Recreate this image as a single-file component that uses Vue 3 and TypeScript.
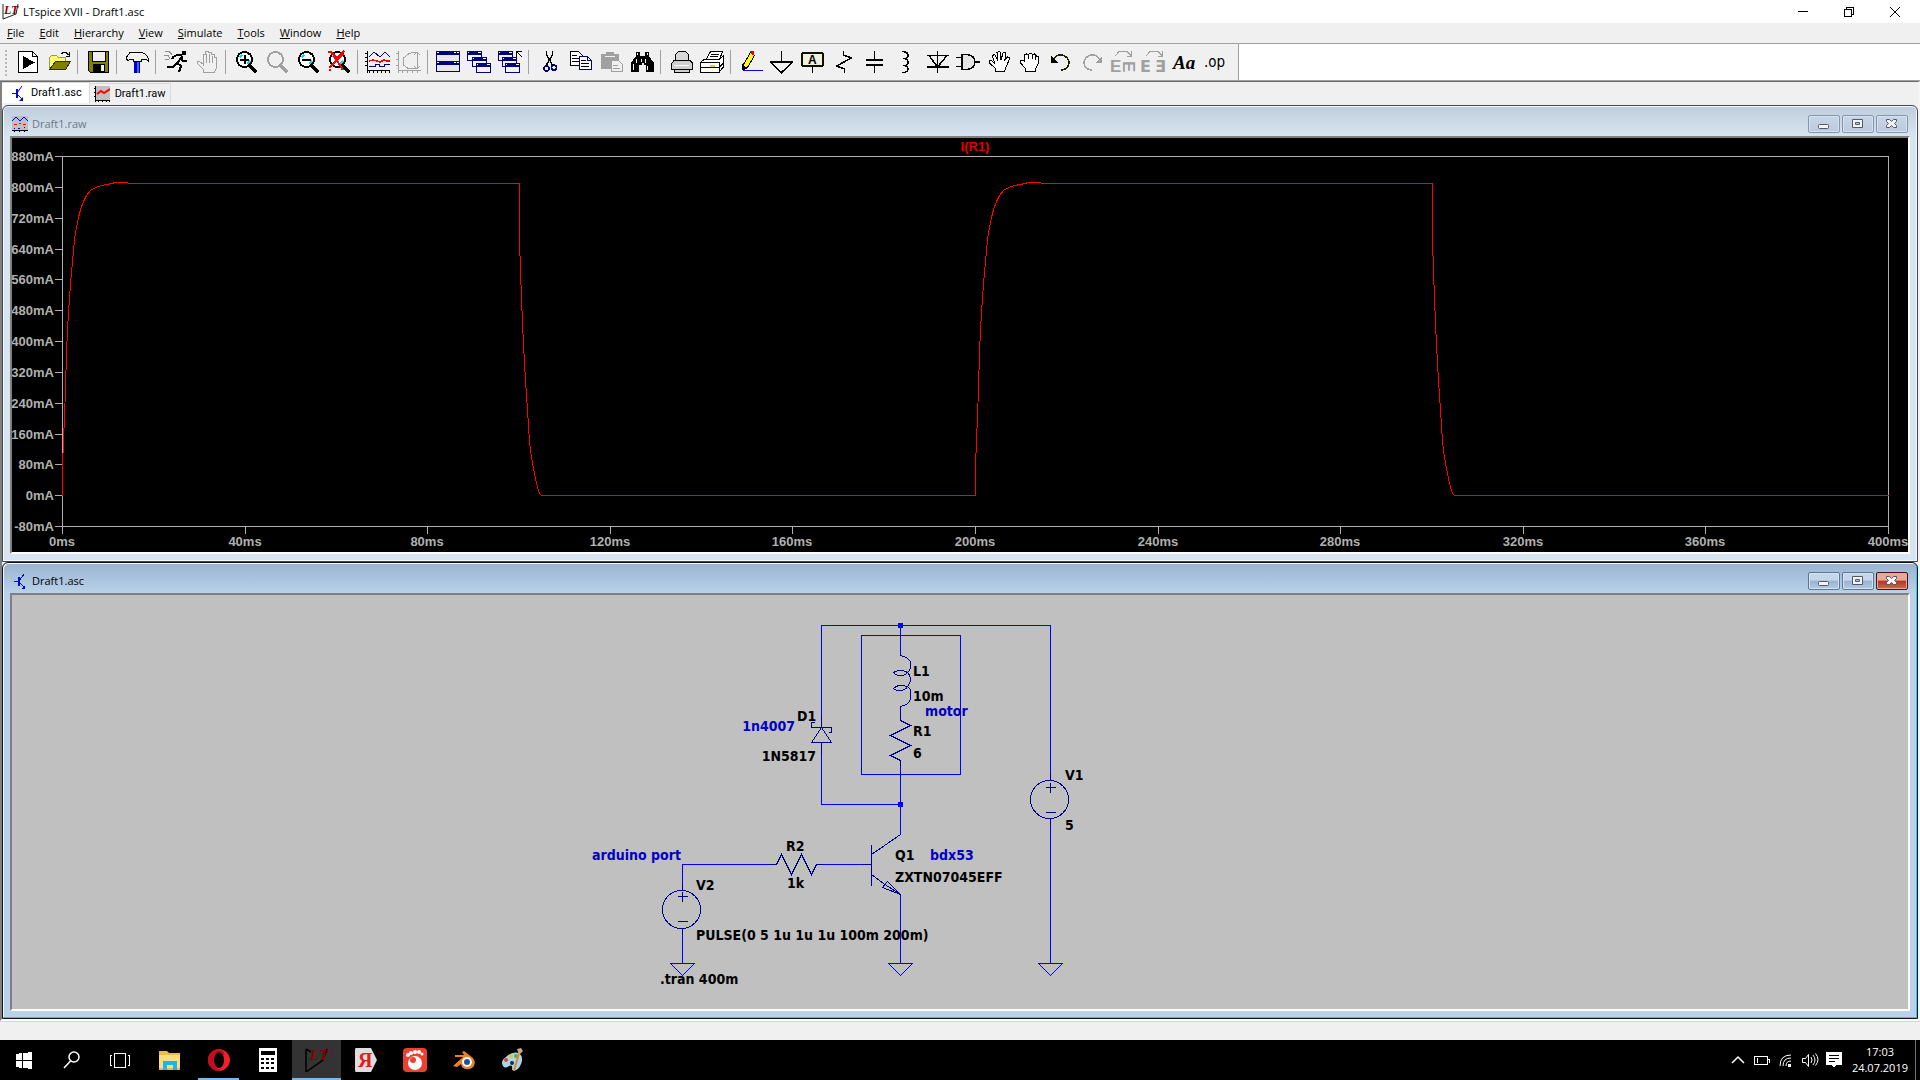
<script setup lang="ts">
interface Tool {
  label: string
  art: string
  off?: boolean
}
type ToolGroup = Tool[]

interface Label {
  x: number
  y: number
  text: string
  note?: boolean
  end?: boolean
}

const menus: string[] = ['File', 'Edit', 'Hierarchy', 'View', 'Simulate', 'Tools', 'Window', 'Help']

const lens = (ink: string, glass: string, inner: string): string =>
  `<circle cx="10.500" cy="9.500" r="7.500" fill="${glass}" stroke="${ink}" stroke-width="2"/>${inner}<path d="M15.500 15.500l7 6.500" stroke="${ink}" stroke-width="3.500" fill="none"/>`

const shine = '<path d="M6 7.500l2-3M13 14l3-3" stroke="#00e0e8" stroke-width="2" fill="none"/>'

const smallWindow = (x: number, y: number): string =>
  `<rect x="${x + 0.5}" y="${y + 0.5}" width="14" height="9" fill="#f4f4f4" stroke="#000080"/><rect x="${x}" y="${y}" width="15" height="4" fill="#000080"/><path d="M${x + 1} ${y + 1.5}h1M${x + 11} ${y + 1.5}h3" stroke="#fff"/>`

const palm =
  'M8.500 21.500v-3l-6-5.500v-2l2-.5 3 2.500-2-7 1.500-1.500 1.500 1 2 5-.5-8 2-1 1.500 1 .5 7.500 2-7 2-.5 1 1.500-1.500 7 3-4 2 .5v1.500l-3 7-2 5.500z'

const groups: ToolGroup[] = [
  [
    {
      label: 'New schematic',
      art: '<path d="M2.500 1.500h14l5 5v16h-19z" fill="#fff" stroke="#000"/><path d="M16.500 1.500v5h5" fill="none" stroke="#000"/><path d="M7 6l12 6.500L7 19z"/>',
    },
    {
      label: 'Open',
      art: '<path d="M2.500 19V7.500l2-2h5l2 2h7V12" fill="#ffff70" stroke="#9a9a50"/><path d="M2.500 19.500l6-8h15l-5 8z" fill="#808000" stroke="#303000"/><path d="M14.500 4q3-4 7 1M22.500 1.500V6h-4" fill="none" stroke="#000"/>',
    },
  ],
  [
    {
      label: 'Save',
      art: '<path d="M2.500 1.500h20v21h-18l-2-2z" fill="#808000" stroke="#000" stroke-width="1"/><rect x="6.500" y="1.500" width="13" height="10" fill="#f0f0f0" stroke="#000"/><rect x="7" y="14" width="12" height="8.500"/><rect x="15" y="15" width="3" height="6" fill="#f0f0f0"/>',
    },
  ],
  [
    {
      label: 'Control panel',
      art: '<path d="M1 8l4-5.500h10q6 0 8.500 6v3l-3-2.500h-4v2.500h-8V9H5.500L3 11z" fill="#f0f0f0" stroke="#000"/><path d="M6 4.500h9" stroke="#fff"/><path d="M9 12h6v11H9z" fill="#0000c0"/><path d="M12 12h2v11h-2z" fill="#4060ff"/>',
    },
  ],
  [
    {
      label: 'Run',
      art: '<path d="M18 1h4v4h-4z"/><path d="M9 7l4-2h4l1 2-5 6 4 3-2 6M13 13l-4 4H3M17 8l2 3h4M10 6L8 9" stroke="#000" stroke-width="2" fill="none"/><path d="M1 1.500h4l3 3M0 5.500h4l2 3M1 9.500h4" stroke="#909090" fill="none"/>',
    },
    {
      label: 'Halt',
      off: true,
      art: '<path d="M8.500 22.500v-3l-6-6v-2h2l4 3v-10h2v-3h3v1h3v2h3v3h2v10l-2 5z" fill="#f0f0f0" stroke="#a0a0a0"/><path d="M11.500 4v9M14.500 4v9M17.500 6v7M8.500 6v10" stroke="#a0a0a0"/>',
    },
  ],
  [
    { label: 'Zoom area', art: lens('#000', '#fff', shine + '<path d="M6 9.500h9M10.500 5v9" stroke="#000" stroke-width="2"/>') },
    { label: 'Pan', off: true, art: lens('#a0a0a0', '#f0f0f0', '') },
    { label: 'Zoom back', art: lens('#000', '#fff', shine + '<path d="M6 9.500h9" stroke="#000" stroke-width="2"/>') },
    {
      label: 'Zoom full extents',
      art: lens('#000', '#fff', shine) + '<path d="M1 2h3l6 6 7-7M2 18l14-14M2 20h2M7 6l9 14" stroke="#f00" stroke-width="2" fill="none"/>',
    },
  ],
  [
    {
      label: 'Autorange',
      art: '<path d="M1.500 1v21.500M-1 3.500h2M-1 7.500h2M-1 11.500h2M-1 15.500h2M1 20.500h23M3.500 21v2M7.500 21v2M11.500 21v2M15.500 21v2M19.500 21v2M23.500 21v2" stroke="#000"/><path d="M3 7l5-5 6 5 5-5 5 5M3 16.500h6v-2h4v2h5v-2h6" stroke="#000090" fill="none"/><path d="M3 11l4-1 4 1 3 1 4-2 3 1h3" stroke="#f00" stroke-width="1.500" fill="none"/>',
    },
    {
      label: 'Bode plot',
      off: true,
      art: '<path d="M1.500 1v21.500M-1 3.500h2M-1 9.500h2M-1 15.500h2M1 20.500h23M5.500 21v2M10.500 21v2M15.500 21v2M20.500 21v2M12 3.500L6.500 8v7l5.500 4M11 3.500l8-1.500M12 18.500h8M20.500 2v17M17 5l3-3 3 3M17 16l3 3 3-3" stroke="#a0a0a0" fill="none"/>',
    },
  ],
  [
    {
      label: 'Tile windows',
      art: '<rect x=".5" y="1.500" width="23" height="20" fill="#e8e8e8" stroke="#000080"/><path d="M0 1h24v4H0zM0 11h24v4H0z" fill="#000080"/><path d="M1 2.500h2M18 2.500h2M21 2.500h2M1 12.500h2M18 12.500h2M21 12.500h2" stroke="#fff"/>',
    },
    { label: 'Cascade windows', art: smallWindow(0, 1) + smallWindow(5, 7) + smallWindow(9, 13) },
    {
      label: 'Close all windows',
      art: smallWindow(0, 1) + smallWindow(4, 7) + smallWindow(7, 13) + '<path d="M24 7l-5-5M18.500 7V1.500H24" stroke="#000" fill="none"/>',
    },
  ],
  [
    {
      label: 'Cut',
      art: '<path d="M9.500 1v4l6 10M15.500 1v4l-6 10" stroke="#000" stroke-width="1.500" fill="none"/><circle cx="9.500" cy="18.500" r="2.500" fill="none" stroke="#000080" stroke-width="1.500"/><circle cx="17" cy="17.500" r="2.500" fill="none" stroke="#000080" stroke-width="1.500"/>',
    },
    {
      label: 'Copy',
      art: '<path d="M2.500 1.500h8l4 4v10h-12z" fill="#fff" stroke="#000"/><path d="M4 5.500h5M4 8.500h8M4 11.500h8" stroke="#000"/><path d="M11.500 6.500h8l4 4v9h-12z" fill="#fff" stroke="#000080"/><path d="M19.500 6.500v4h4" stroke="#000080" fill="none"/><path d="M13 10.500h5M13 13.500h8M13 16.500h8" stroke="#000"/>',
    },
    {
      label: 'Paste',
      off: true,
      art: '<path d="M2 4h5V2h8v2h5v15H2z" fill="#a0a0a0"/><path d="M6 6.500h10" stroke="#f0f0f0"/><path d="M12.500 10.500h7l4 4v7h-11z" fill="#f0f0f0" stroke="#a0a0a0"/><path d="M14 15.500h5M14 18.500h7" stroke="#a0a0a0"/>',
    },
    {
      label: 'Find',
      art: '<path d="M6 2h4v4h5V2h4v4l5 7v9h-8v-7h-2v-2h-2v2h-3v7H1v-9l5-7z"/><path d="M7.500 3v2M17 3v2M6.500 9v4M15.500 9v4M3.500 14v6M17.500 16v4M11.500 9v3" stroke="#f0f0f0"/>',
    },
  ],
  [
    {
      label: 'Print',
      art: '<path d="M6.500 10V4.500l3-3h7l3 3V10" fill="#d8d8d8" stroke="#000"/><path d="M2.500 13.500l3-3.500h15l3 3v6h-3v3h-15v-3h-3z" fill="#d0d0d0" stroke="#000"/><path d="M6 19.500h14" stroke="#000"/><path d="M5 15.500h15" stroke="#fff"/>',
    },
    {
      label: 'Print setup',
      art: '<path d="M6.500 9l4-7.500h12l-3 8z" fill="#fff" stroke="#000"/><path d="M11 4.500h8M10 6.500h8" stroke="#000"/><path d="M.5 12.500l4-3.500h15l4-3v11l-5 5.500H.5z" fill="#fff" stroke="#000"/><path d="M1 12.500h18v10M1 17.500h18l4-4" stroke="#000" fill="none"/><path d="M10 15.500h5" stroke="#e8d800" stroke-width="2"/>',
    },
  ],
  [
    {
      label: 'Wire',
      art: '<path d="M4.500 14.500l7-12 4 3-7 12-4 2z" fill="#ff0" stroke="#000"/><path d="M3 14l5 4-5 2z"/><path d="M11 1h4v4h-2z" fill="#e00000"/><path d="M4 20.500h20" stroke="#0000ff"/>',
    },
    { label: 'Ground', art: '<path d="M11.500 1v11M0 12h23M1 12.500l10.500 10 10.500-10" stroke="#000" stroke-width="1.500" fill="none"/>' },
    {
      label: 'Label net',
      art: '<rect x="1" y="3" width="21" height="13" rx="2" fill="#f0f0e0" stroke="#101000" stroke-width="2"/><path d="M11.500 17v6" stroke="#000"/><text x="7" y="14" font-family="Liberation Sans, sans-serif" font-weight="700" font-size="12">A</text>',
    },
    { label: 'Resistor', art: '<path d="M11.500 1v4l8 3-15 8 8 3v4" stroke="#000" stroke-width="1.500" fill="none"/>' },
    { label: 'Capacitor', art: '<path d="M11.500 1v8M11.500 16v7" stroke="#000"/><path d="M3 10h17M3 15h17" stroke="#000" stroke-width="2"/>' },
    { label: 'Inductor', art: '<path d="M8 1.500q6 0 6 4t-5 3q5 0 5 4t-5 3q5 0 5 3.500t-6 3.500" stroke="#000" stroke-width="1.500" fill="none"/>' },
    { label: 'Diode', art: '<path d="M12.500 1v22M2 5.500h22M4 5.500l8.500 11.500L22 5.500M2 17h22" stroke="#000" stroke-width="1.500" fill="none"/>' },
    { label: 'Component', art: '<path d="M0 7.500h6M0 16.500h6M18 12h6" stroke="#000" stroke-width="1.500"/><path d="M6 4.500h5q8 1 8 7.500t-8 7.500H6z" stroke="#000" stroke-width="1.500" fill="#e4e4e4"/>' },
    { label: 'Move', art: `<path d="${palm}" fill="#fff" stroke="#000"/>` },
    {
      label: 'Drag',
      art: '<path d="M7.500 21.500v-3l-5-5.500v-3h4v-5l2-1 2 1 1-2h2l1 2 2-1 2 2 2 .5v7l-3 5v3z" fill="#fff" stroke="#000"/><path d="M6.500 9v3M10.500 5v4M14.500 5v4M17.500 6v4" stroke="#000"/>',
    },
    { label: 'Undo', art: '<path d="M4 10q3-6 9-5 7 2 7 8-1 7-8 7" stroke="#202000" stroke-width="1.500" fill="none"/><path d="M2 6v7h7z"/>' },
    { label: 'Redo', off: true, art: '<path d="M20 10q-3-6-9-5-7 2-7 8 1 7 8 7" stroke="#a0a0a0" stroke-width="1.500" fill="none"/><path d="M22 6v7h-7z" fill="#a0a0a0"/>' },
    {
      label: 'Rotate',
      off: true,
      art: '<path d="M4 6l4-4.500h8l4 4M20.500 1v5H16" stroke="#a0a0a0" fill="none"/><g fill="#a0a0a0" font-family="Liberation Sans, sans-serif" font-weight="700" font-size="17"><text x="-1" y="22">E</text><text x="11" y="-12" transform="rotate(90)">E</text></g>',
    },
    {
      label: 'Mirror',
      off: true,
      art: '<path d="M4 6l4-4.500h8l4 4M20.500 1v5H16" stroke="#a0a0a0" fill="none"/><g fill="#a0a0a0" font-family="DejaVu Sans, sans-serif" font-weight="700" font-size="16"><text x="-2" y="22">E</text><text x="13" y="22">Ǝ</text></g>',
    },
    { label: 'Text', art: '<text x="0" y="19" font-family="Liberation Serif, serif" font-weight="700" font-style="italic" font-size="19">Aa</text>' },
    { label: 'Spice directive', art: '<text x="0" y="17" font-family="DejaVu Sans Condensed, Noto Sans, sans-serif" font-size="15">.op</text>' },
  ],
]

/* waveform window */
const plot = { left: 50, right: 1876, top: 18, bottom: 388, period: 913 }
const yTicks = Array.from({ length: 13 }, (_, i) => ({
  y: Math.round(plot.top + (i * (plot.bottom - plot.top)) / 12),
  text: `${880 - i * 80}mA`,
}))
const xTicks = Array.from({ length: 11 }, (_, i) => ({
  x: Math.round(plot.left + (i * (plot.right - plot.left)) / 10),
  text: `${i * 40}ms`,
}))

const rise: [number, number][] = [
  [0, 357], [0, 330], [1, 300], [2, 279], [3, 250], [4, 215], [5, 191], [6, 174], [7, 159], [8, 146], [9, 134],
  [10, 124], [11, 112], [12, 101], [14, 89], [16, 79], [18, 71], [21, 63], [24, 57], [28, 52], [33, 49], [39, 47],
  [45, 46], [53, 44], [65, 44], [66, 45], [457, 45],
]
const fall: [number, number][] = [
  [457, 102], [458, 133], [459, 160], [460, 184], [461, 206], [462, 225], [463, 242], [464, 257], [465, 271],
  [466, 288], [467, 303], [469, 319], [471, 330], [473, 340], [475, 349], [477, 355], [479, 357], [913, 357],
]
const trace = [0, 1]
  .flatMap((n) => [...rise, ...fall].map(([x, y]) => `${plot.left + n * plot.period + x},${y}`))
  .join(' ')

/* schematic window */
const labels: Label[] = [
  { x: 901, y: 81, text: 'L1' },
  { x: 901, y: 106, text: '10m' },
  { x: 913, y: 121, text: 'motor', note: true },
  { x: 901, y: 141, text: 'R1' },
  { x: 901, y: 163, text: '6' },
  { x: 785, y: 126, text: 'D1' },
  { x: 783, y: 136, text: '1n4007', note: true, end: true },
  { x: 804, y: 166, text: '1N5817', end: true },
  { x: 1053, y: 185, text: 'V1' },
  { x: 1053, y: 235, text: '5' },
  { x: 883, y: 265, text: 'Q1' },
  { x: 918, y: 265, text: 'bdx53', note: true },
  { x: 883, y: 287, text: 'ZXTN07045EFF' },
  { x: 774, y: 256, text: 'R2' },
  { x: 775, y: 293, text: '1k' },
  { x: 580, y: 265, text: 'arduino port', note: true },
  { x: 684, y: 295, text: 'V2' },
  { x: 684, y: 345, text: 'PULSE(0 5 1u 1u 1u 100m 200m)' },
  { x: 648, y: 389, text: '.tran 400m' },
]
</script>

<template>
  <div class="desktop">
    <header class="title">
      <svg class="logo" viewBox="0 0 18 18" aria-hidden="true">
        <path d="M1 1v15l13-5 2-10" fill="none" stroke="#202020" />
        <text x="2" y="11">LT</text>
      </svg>
      <h1>LTspice XVII - Draft1.asc</h1>
      <div class="sys">
        <button type="button" aria-label="Minimize"><svg viewBox="0 0 12 12"><path d="M1 5.500h10" /></svg></button>
        <button type="button" aria-label="Restore"><svg viewBox="0 0 12 12"><path d="M1.500 3.500h7v7h-7zM3.500 3V1.500h7v7H9" /></svg></button>
        <button type="button" aria-label="Close"><svg viewBox="0 0 12 12" class="smooth"><path d="M1 1l10 10M11 1L1 11" /></svg></button>
      </div>
    </header>

    <nav class="menu" aria-label="Main menu">
      <button v-for="m in menus" :key="m" type="button"><u>{{ m[0] }}</u>{{ m.slice(1) }}</button>
    </nav>

    <div class="toolrow">
      <div class="toolbar" role="toolbar" aria-label="Tools">
        <div v-for="(g, i) in groups" :key="i" class="group">
          <button v-for="t in g" :key="t.label" type="button" :aria-label="t.label" :disabled="t.off">
            <svg viewBox="0 0 24 24" v-html="t.art"></svg>
          </button>
        </div>
      </div>
    </div>

    <main class="mdi">
      <div class="tabs">
        <button type="button" class="tab active">
          <svg viewBox="0 0 16 16"><path d="M2 8.500h4M7 8l5-7M7 9l5 5" stroke="#00f" fill="none" /><path d="M6 4h2v9H6zM13 16v-4l-4 4z" fill="#00f" /></svg>
          Draft1.asc
        </button>
        <button type="button" class="tab">
          <svg viewBox="0 0 16 16"><path d="M1 0h15v14H1z" fill="#c0c0c0" /><path d="M1.500 0v16M0 2.500h1M0 6.500h1M0 10.500h1M1 14.500h15M4.500 14v2M8.500 14v2M12.500 14v2M15.500 14v2" stroke="#000" /><path d="M3 8l4-3 3 2 6-4" stroke="#f00" stroke-width="2" fill="none" /></svg>
          Draft1.raw
        </button>
      </div>

      <section class="child">
        <div class="bar">
          <svg class="docicon" viewBox="0 0 16 16"><path d="M0 0h16v14H0z" fill="#c0c0c0" /><path d="M0 5l4-4 4 4 4-4 4 4" stroke="#00f" fill="none" /><path d="M2 8.500h3M7 7.500h2M11 8.500h3" stroke="#f00" /><path d="M2 12.500h1M6 12.500h2M12 11.500h1" stroke="#00f" /><path d="M0 14.500h16M2.500 14v2M7.500 14v2M12.500 14v2" stroke="#000" /></svg>
          <h2>Draft1.raw</h2>
          <div class="ctl">
            <button type="button" aria-label="Minimize plot"><svg viewBox="0 0 14 14"><rect x="1.500" y="7.500" width="10" height="4" rx="1" /></svg></button>
            <button type="button" aria-label="Maximize plot"><svg viewBox="0 0 14 14"><path fill-rule="evenodd" d="M1.500 2.500h10v8h-10zM4.500 5.500h4v2h-4z" /></svg></button>
            <button type="button" aria-label="Close plot"><svg viewBox="0 0 14 14"><path d="M1.500 2.500h3l2 2 2-2h3v2l-2 2 2 2v2h-3l-2-2-2 2h-3v-2l2-2-2-2z" /></svg></button>
          </div>
        </div>
        <div class="client">
          <svg class="plot" viewBox="0 0 1896 414" role="img" aria-label="Current through R1">
            <g class="axis">
              <path :d="`M${plot.left + 0.5} ${plot.top + 0.5}H${plot.right + 0.5}V${plot.bottom + 0.5}H${plot.left + 0.5}z`" />
              <path v-for="t in yTicks" :key="t.text" :d="`M${plot.left - 7} ${t.y + 0.5}h7`" />
              <path v-for="t in xTicks" :key="t.text" :d="`M${t.x + 0.5} ${plot.bottom}v8`" />
            </g>
            <g class="ylab"><text v-for="t in yTicks" :key="t.text" x="42" :y="t.y + 5">{{ t.text }}</text></g>
            <g class="xlab"><text v-for="t in xTicks" :key="t.text" :x="t.x" :y="408">{{ t.text }}</text></g>
            <text class="tracename" x="963" y="13">I(R1)</text>
            <polyline class="trace" transform="translate(.5 .5)" :points="trace" />
          </svg>
        </div>
      </section>

      <section class="child front">
        <div class="bar">
          <svg class="docicon" viewBox="0 0 16 16"><path d="M2 8.500h4M7 8l5-7M7 9l5 5" stroke="#00f" fill="none" /><path d="M6 4h2v9H6zM13 16v-4l-4 4z" fill="#00f" /></svg>
          <h2>Draft1.asc</h2>
          <div class="ctl">
            <button type="button" aria-label="Minimize schematic"><svg viewBox="0 0 14 14"><rect x="1.500" y="7.500" width="10" height="4" rx="1" /></svg></button>
            <button type="button" aria-label="Maximize schematic"><svg viewBox="0 0 14 14"><path fill-rule="evenodd" d="M1.500 2.500h10v8h-10zM4.500 5.500h4v2h-4z" /></svg></button>
            <button type="button" class="red" aria-label="Close schematic"><svg viewBox="0 0 14 14"><path d="M1.500 2.500h3l2 2 2-2h3v2l-2 2 2 2v2h-3l-2-2-2 2h-3v-2l2-2-2-2z" /></svg></button>
          </div>
        </div>
        <div class="client">
          <svg class="sheet" viewBox="0 0 1896 414" role="img" aria-label="Motor driver schematic">
            <g class="wire" transform="translate(.5 .5)">
              <path d="M809 126V30H1038V178M888 30V60M888 165V239M809 158V209H888M670 288V269H758M808 269H850M888 299V368M1038 229V368M670 338V368" />
              <path d="M849 40h99v139h-99z" />
              <path d="M658 368h24l-12 12zM876 368h24l-12 12zM1026 368h24l-12 12z" />
            </g>
            <path class="node" d="M886 28h5v5h-5zM886 207h5v5h-5z" />
            <g class="part" transform="translate(.5 .5)">
              <path d="M888 60q10 3 10 7v6q-3 7-10 7-5 0-7-3 3-2 7-2 10 0 10 10-3 10-10 10-5 0-7-2 3-3 7-3 10 0 10 6v6q0 7-10 9v14l10 5-20 10 20 10-20 10 10 5v5" />
              <path d="M802 127h-3v5h20v5h-3M809 132l10 15h-20zM809 120v12M809 147v11" />
              <path d="M756 269h8l5-10 10 20 10-20 10 20 5-10h6M850 269h9M859 249v41M859 259l29-20M859 279l12 9M888 299l-13-13-5 6zM871 288l17 11" />
              <circle cx="1037" cy="204" r="19" />
              <circle cx="669" cy="314" r="19" />
              <path d="M1033 192h10M1038 187v10M1033 217h10M665 301h10M670 296v10M665 326h10M1038 178v7M1038 223v6M670 288v7M670 333v6" />
            </g>
            <text v-for="l in labels" :key="l.text" :x="l.x" :y="l.y" :class="{ note: l.note, end: l.end }">{{ l.text }}</text>
          </svg>
        </div>
      </section>
    </main>

    <footer class="status"></footer>

    <div class="taskbar">
      <button type="button" aria-label="Start" class="first"><svg viewBox="0 0 24 24" class="crisp"><path d="M4 6l6-1v7H4zM11 5l9-1v8h-9zM4 13h6v7l-6-1zM11 13h9v8l-9-1z" fill="#fff" /></svg></button>
      <button type="button" aria-label="Search"><svg viewBox="0 0 24 24"><circle cx="14" cy="9" r="5" fill="none" stroke="#fff" stroke-width="1.500" /><path d="M10.500 13L4 20" stroke="#fff" stroke-width="1.500" /></svg></button>
      <button type="button" aria-label="Task view"><svg viewBox="0 0 24 24" class="crisp"><path d="M5.500 5.500h11v14h-11zM3 7.500H1.500v10H3M19 7.500h1.500v10H19" fill="none" stroke="#fff" /></svg></button>
      <button type="button" aria-label="Explorer"><svg viewBox="0 0 24 24"><path d="M1 3h8l2 2h11v17H1z" fill="#e8bc45" /><path d="M1 7h21v13H1z" fill="#fbdc7c" /><path d="M5 22V13h14v9h-4v-5h-6v5z" fill="#1cb4f0" /></svg></button>
      <button type="button" aria-label="Opera" class="open"><svg viewBox="0 0 24 24"><path fill-rule="evenodd" d="M12 1c6 0 11 5 11 11s-5 11-11 11S1 18 1 12 6 1 12 1zm0 3c-3 0-5 4-5 8s2 8 5 8 5-4 5-8-2-8-5-8z" fill="#f0202c" /><path d="M12 1C6 1 1 6 1 12s5 11 11 11l2-1q-7-1-7-10 0-8 5-8 3 0 5 4 2-5-5-7" fill="#c40c1c" /></svg></button>
      <button type="button" aria-label="Calculator"><svg viewBox="0 0 24 24" class="crisp"><path d="M3 0h18v24H3z" fill="#fff" /><path d="M5 3h14v4H5z" fill="#000" /><path d="M5 10.500h14M5 14.500h14M5 19.500h14" stroke="#000" stroke-width="2" stroke-dasharray="3 2" /></svg></button>
      <button type="button" aria-label="LTspice" class="current"><svg viewBox="0 0 24 24"><path d="M1 1v23l17-12 4-11M1 1l5 3" fill="none" stroke="#000" stroke-width="1.500" /><text x="5" y="12" class="lt">LT</text></svg></button>
      <button type="button" aria-label="Yandex"><svg viewBox="0 0 24 24"><path d="M2 0h15l6 12-6 12H2q-1 0-1-2V2q0-2 1-2z" fill="#dedede" /><text x="4" y="19" class="ya">Я</text></svg></button>
      <button type="button" aria-label="Recorder"><svg viewBox="0 0 24 24"><rect width="24" height="24" rx="4" fill="#ec4030" /><circle cx="12" cy="15" r="7" fill="#fff" /><circle cx="10" cy="12" r="3" fill="#ec4030" /><g fill="#fff"><circle cx="5" cy="7" r="2" /><circle cx="8" cy="5" r="2" /><circle cx="12" cy="4" r="2" /><circle cx="16" cy="4" r="2" /><circle cx="19" cy="6" r="1.500" /></g></svg></button>
      <button type="button" aria-label="Blender"><svg viewBox="0 0 24 24"><path d="M1 18l10-9H3V7h9l-2-3 2-1 9 7q4 6-1 10-6 3-10-1l-1-3-4 3z" fill="#f08020" /><circle cx="15" cy="14" r="5" fill="#fff" /><circle cx="15" cy="14" r="3" fill="#205098" /></svg></button>
      <button type="button" aria-label="Paint"><svg viewBox="0 0 24 24"><path d="M2 18q-3-5 3-9Q11 3 18 5q5 4 2 11-3 8-9 6 1-6-3-4-4 3-6 0z" fill="#a8d4ec" /><circle cx="10" cy="8" r="2" fill="#f0c030" /><circle cx="5" cy="12" r="2" fill="#d84040" /><circle cx="15" cy="8" r="2" fill="#50b040" /><circle cx="11" cy="15" r="2" fill="#103050" /><path d="M13 23l5-18" stroke="#e08828" stroke-width="2" /><path d="M16 1l4-1 2 3-4 4z" fill="#c8a880" /></svg></button>
      <div class="tray">
        <svg viewBox="0 0 18 18"><path d="M3 12l6-6 6 6" stroke-width="1.500" /></svg>
        <svg viewBox="0 0 18 18" class="crisp"><path d="M1.500 5.500h13v8h-13zM15 8.500h1v3M4.500 7v5" /></svg>
        <svg viewBox="0 0 18 18"><path d="M3 15Q3 4 14 4M6 15q0-8 8-8M9 15q0-5 5-5" /><path d="M11 13h3v3h-3z" fill="#fff" stroke="none" /></svg>
        <svg viewBox="0 0 18 18"><path d="M1.500 7.500h3l3-4v12l-3-4h-3zM10 6q2 3 0 6M12 4q4 5 0 10M14.500 2.500q5 6 0 12" /></svg>
        <svg viewBox="0 0 18 18" class="crisp"><path d="M1 1h16v13h-6l-2 3-2-3H1z" fill="#fff" stroke="none" /><path d="M4 4.500h10M4 7.500h10M4 10.500h6" stroke="#000" /></svg>
        <time datetime="2019-07-24T17:03"><span>17:03</span><span>24.07.2019</span></time>
      </div>
    </div>
  </div>
</template>

<style>
body {
  margin: 0;
  background: #f0f0f0;
}
</style>

<style scoped>
.desktop {
  display: flex;
  flex-direction: column;
  min-height: 100vh;
  font-family: 'Open Sans', 'Noto Sans', sans-serif;
  font-size: 11px;
  line-height: 16px;
  color: #000;
  background: #f0f0f0;
}
button {
  margin: 0;
  padding: 0;
  border: 0;
  background: none;
  font: inherit;
  color: inherit;
}
svg {
  display: block;
}
h1,
h2 {
  margin: 0;
  font-size: 11px;
  font-weight: 400;
}
.title {
  display: flex;
  align-items: center;
  height: 23px;
  padding: 0 2px;
  background: #fff;
}
.title h1 {
  flex: 1;
  padding-left: 3px;
}
.logo {
  width: 18px;
  height: 18px;
}
.logo text {
  font: italic 700 12px 'Liberation Serif', serif;
  fill: #8b0000;
}
.sys {
  display: flex;
}
.sys button {
  display: flex;
  justify-content: center;
  width: 46px;
}
.sys svg {
  width: 12px;
  height: 12px;
  fill: none;
  stroke: #000;
  shape-rendering: crispEdges;
}
.sys svg.smooth {
  shape-rendering: auto;
}
.menu {
  display: flex;
  gap: 15px;
  height: 20px;
  padding-left: 7px;
  border-bottom: 1px solid #a0a0a0;
}
.toolrow {
  display: flex;
  background: #fff;
  border-bottom: 1px solid #a0a0a0;
}
.toolbar {
  position: relative;
  display: flex;
  align-items: center;
  height: 36px;
  padding: 0 7px 0 12px;
  background: #f0f0f0;
  border-right: 1px solid #a0a0a0;
}
.toolbar::before {
  content: '';
  position: absolute;
  left: 5px;
  top: 6px;
  bottom: 4px;
  border-left: 2px dotted #b8b8b8;
}
.group {
  display: flex;
}
.group + .group {
  margin-left: 3px;
  padding-left: 4px;
  border-left: 1px solid #a0a0a0;
}
.group button {
  padding: 0 3px 0 4px;
}
.group svg {
  width: 24px;
  height: 24px;
  overflow: visible;
  shape-rendering: crispEdges;
}
.mdi {
  border: solid;
  border-width: 1px 2px 2px;
  border-color: #696969 #f4f4f4 #fff #808080;
}
.tabs {
  display: flex;
  align-items: flex-end;
  height: 23px;
}
.tab {
  display: flex;
  align-items: center;
  gap: 5px;
  height: 20px;
  margin-bottom: 2px;
  padding: 0 4px;
  border: 1px solid #dadada;
  border-left: 0;
  border-bottom: 0;
  font-family: Roboto, 'Liberation Sans', sans-serif;
}
.tab.active {
  height: 21px;
  padding: 0 7px 0 8px;
  background: #fff;
}
.tab svg {
  width: 16px;
  height: 16px;
}
.child {
  padding: 1px 7px 7px;
  border: 1px solid #44484e;
  border-radius: 6px 6px 0 0;
  box-shadow: inset 0 0 0 1px #f4f8fc;
  background: linear-gradient(#bfcddb, #d7e4f2 30px);
}
.child.front {
  background: linear-gradient(#99b4d1, #b9d1ea 30px);
  border-color: #101418;
  box-shadow:
    inset -1px -1px 0 #2cc8e4,
    inset 1px 1px 0 #f4f8fc;
}
.bar {
  display: flex;
  align-items: center;
  height: 23px;
  padding: 5px 2px 1px;
}
.bar h2 {
  flex: 1;
  padding-left: 4px;
  color: #6d7886;
}
.front h2 {
  color: #000;
}
.docicon {
  width: 16px;
  height: 16px;
  shape-rendering: crispEdges;
}
.ctl {
  display: flex;
  gap: 2px;
}
.ctl button {
  display: flex;
  align-items: center;
  justify-content: center;
  box-sizing: border-box;
  width: 32px;
  height: 18px;
  border: 1px solid #8496ae;
  border-radius: 2px;
  background: linear-gradient(#c8d6e6, #bccbdd);
  box-shadow: inset 0 0 0 1px #d6e2ef;
}
.front .ctl button {
  border-color: #5f7594;
  background: linear-gradient(#c4d6ea 45%, #9ab2d0 50%, #b4cae2);
}
.front .ctl .red {
  border-color: #4a1018;
  background: linear-gradient(#e8a898 45%, #b83420 50%, #d06850);
  box-shadow: inset 0 0 0 1px #e8a898;
}
.ctl svg {
  width: 14px;
  height: 14px;
  fill: #f4f4f4;
  stroke: #50586c;
}
.client {
  border: 2px solid;
  border-color: #808080 #fcfcfc #fcfcfc #808080;
}
.plot,
.sheet {
  width: 100%;
  height: auto;
}
.plot {
  background: #000;
  font: 700 13px 'Liberation Sans', Arial, sans-serif;
}
.axis,
.trace {
  fill: none;
  stroke: #b0b0b0;
  shape-rendering: crispEdges;
}
.trace {
  stroke: #f00;
}
.ylab {
  fill: #b0b0b0;
  text-anchor: end;
}
.xlab {
  fill: #b0b0b0;
  text-anchor: middle;
}
.tracename {
  fill: #e00000;
  text-anchor: middle;
}
.sheet {
  background: #c0c0c0;
  font: 700 14px 'DejaVu Sans Condensed', 'Noto Sans', sans-serif;
}
.wire,
.part {
  fill: none;
  stroke: #0000ff;
  shape-rendering: crispEdges;
}
.part {
  stroke: #000090;
}
.node {
  fill: #0000ff;
}
.sheet .note {
  fill: #0000c8;
}
.sheet .end {
  text-anchor: end;
}
.status {
  flex: 1;
  min-height: 16px;
  border-top: 1px solid #d7d7d7;
}
.taskbar {
  display: flex;
  height: 40px;
  background: #000;
  color: #fff;
}
.taskbar button {
  display: flex;
  align-items: center;
  justify-content: center;
  box-sizing: border-box;
  width: 49px;
  height: 40px;
}
.taskbar .first {
  width: 47px;
}
.taskbar button svg {
  width: 24px;
  height: 24px;
}
.taskbar .open,
.taskbar .current {
  border-top: 2px solid transparent;
  border-bottom: 2px solid #76b9ed;
}
.taskbar .open {
  width: 41px;
  margin: 0 4px;
}
.taskbar .current {
  background: #333;
}
.crisp {
  shape-rendering: crispEdges;
}
.lt {
  font: italic 700 15px 'Liberation Serif', serif;
  fill: #8b0000;
}
.ya {
  font: 700 20px 'Liberation Serif', serif;
  fill: #e02020;
}
.tray {
  display: flex;
  align-items: center;
  gap: 6px;
  margin-left: auto;
  margin-right: 4px;
  padding-right: 7px;
  border-right: 1px solid #707070;
}
.tray svg {
  width: 18px;
  height: 18px;
  fill: none;
  stroke: #fff;
}
.tray time {
  display: flex;
  flex-direction: column;
  align-items: center;
  padding-left: 3px;
}
</style>
